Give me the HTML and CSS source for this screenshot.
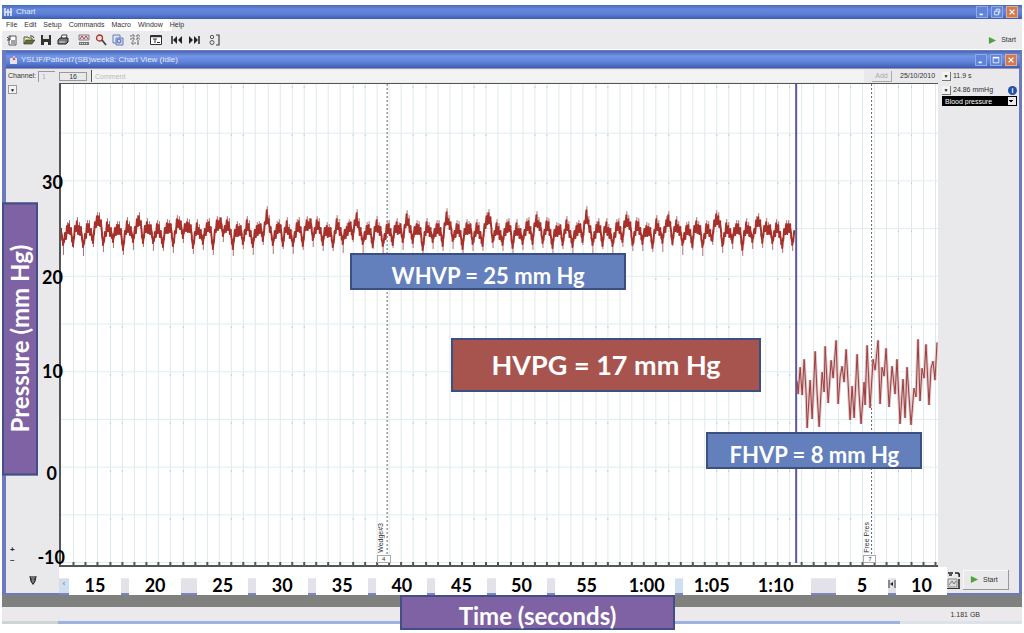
FILE: index.html
```html
<!DOCTYPE html>
<html lang="en">
<head>
<meta charset="utf-8">
<title>Chart</title>
<link rel="stylesheet" href="styles.css">
</head>
<body>
<div class="app">
  <header class="titlebar">
    <svg class="title-icon" viewBox="0 0 10 10"><path d="M1 1v8M4 2v7M7 1v8M1 5h7" stroke="#dfe6f7" stroke-width="1.6" fill="none"/></svg>
    <span class="title">Chart</span>
    <div class="window-buttons">
      <button class="win" aria-label="Minimize"><svg viewBox="0 0 10 10"><path d="M2 8h4" stroke="#fff" stroke-width="2"/></svg></button>
      <button class="win" aria-label="Restore"><svg viewBox="0 0 10 10"><path d="M4 4V1.500h4.500V6H7M2 4h5v4.500H2z" fill="none" stroke="#fff"/></svg></button>
      <button class="win close" aria-label="Close"><svg viewBox="0 0 10 10"><path d="M2 2l6 6M8 2L2 8" stroke="#fff" stroke-width="1.600"/></svg></button>
    </div>
  </header>

  <nav class="menubar">
    <button>File</button><button>Edit</button><button>Setup</button><button>Commands</button><button>Macro</button><button>Window</button><button>Help</button>
  </nav>

  <div class="toolbar">
    <button class="tool" aria-label="New"><svg viewBox="0 0 12 12"><path d="M3 2h7v9H3z" fill="#fff" stroke="#555"/><path d="M1 3l3 3M4 2v4H1M5 7h4M5 9h4" stroke="#444" fill="none"/></svg></button>
    <button class="tool" aria-label="Open"><svg viewBox="0 0 12 12"><path d="M1 10V3h4l1 1h3v2" fill="#e9e59a" stroke="#555"/><path d="M1 10l2-4h9l-3 4z" fill="#5d7534" stroke="#333" stroke-width=".6"/><path d="M7 2q3-1 4 2" fill="none" stroke="#333"/></svg></button>
    <button class="tool" aria-label="Save"><svg viewBox="0 0 12 12"><path d="M1 1h10v10H1z" fill="#333"/><path d="M3 1h6v4H3z" fill="#dfe5da"/><path d="M4 8h4v3H4z" fill="#eee"/></svg></button>
    <button class="tool gap" aria-label="Print"><svg viewBox="0 0 12 12"><path d="M4 5l1-4h5L9 5" fill="#fff" stroke="#444"/><path d="M1 6l2-2h8v4l-2 2H1z" fill="#777" stroke="#222"/><path d="M2 8h6" stroke="#ddd"/></svg></button>
    <button class="tool" aria-label="Channel settings"><svg viewBox="0 0 12 12"><path d="M1 1h10v5H1z" fill="#e6dde8" stroke="#555" stroke-width=".7"/><path d="M2 5l2-3 2 3 2-3 2 3" fill="none" stroke="#a44"/><path d="M1 8h10v3H1z" fill="#777"/><path d="M2 9.500h8" stroke="#ddd" stroke-dasharray="1 1"/></svg></button>
    <button class="tool" aria-label="Zoom"><svg viewBox="0 0 12 12"><circle cx="4.500" cy="4" r="3" fill="#f6e4d2" stroke="#a33" stroke-width="1.300"/><path d="M7 6l4 5" stroke="#444" stroke-width="1.800"/></svg></button>
    <button class="tool" aria-label="Pages"><svg viewBox="0 0 12 12"><path d="M1 1h7v8H1z" fill="#e0e6fa" stroke="#667ab5"/><path d="M4 4h7v7H4z" fill="#cdd7f4" stroke="#667ab5"/><circle cx="7" cy="7" r="2" fill="none" stroke="#4c63ae"/></svg></button>
    <button class="tool" aria-label="Split"><svg viewBox="0 0 12 12"><path d="M1 2h10M1 5h10M4 0v12M9 0v12M2 9h9" stroke="#666" stroke-width="1" stroke-dasharray="2 1"/></svg></button>
    <button class="tool wide" aria-label="Text window"><svg viewBox="0 0 12 12"><path d="M.500 1.500h11v9H.500z" fill="#fff" stroke="#333"/><path d="M.500 2.500h11" stroke="#333" stroke-width="1.500"/><path d="M3 5h4M5 5v4M7 8.500h3" stroke="#333"/></svg></button>
    <button class="tool" aria-label="First"><svg viewBox="0 0 12 12"><path d="M1 2v8" stroke="#222" stroke-width="1.500"/><path d="M6 2v8L2 6zM11 2v8L7 6z" fill="#222"/></svg></button>
    <button class="tool gap" aria-label="Last"><svg viewBox="0 0 12 12"><path d="M11 2v8" stroke="#222" stroke-width="1.500"/><path d="M1 2v8l4-4zM6 2v8l4-4z" fill="#222"/></svg></button>
    <button class="tool" aria-label="Markers"><svg viewBox="0 0 12 12"><circle cx="3" cy="3" r="1.700" fill="none" stroke="#555"/><circle cx="3" cy="8.500" r="2" fill="none" stroke="#555"/><path d="M7 1h3v10H7" fill="none" stroke="#444" stroke-width="1.200"/></svg></button>
    <button class="start"><svg viewBox="0 0 10 10"><path d="M1 1l8 4-8 4z" fill="#4ca53a"/></svg>Start</button>
  </div>

  <main class="chart-window">
    <header class="titlebar child">
      <svg class="title-icon" viewBox="0 0 10 10"><path d="M1 3h7v6H1z" fill="#e8e2ef"/><path d="M3 5l2-4 2 4" fill="#c55" stroke="#fff" stroke-width=".600"/></svg>
      <h1 class="title">YSLIF/Patient7(SB)week8: Chart View (Idle)</h1>
      <div class="window-buttons">
        <button class="win" aria-label="Minimize chart"><svg viewBox="0 0 10 10"><path d="M2 8h4" stroke="#fff" stroke-width="2"/></svg></button>
        <button class="win" aria-label="Maximize chart"><svg viewBox="0 0 10 10"><path d="M1.500 2v6.500h7V2z" fill="none" stroke="#fff"/><path d="M1 2h8" stroke="#fff" stroke-width="2"/></svg></button>
        <button class="win close" aria-label="Close chart"><svg viewBox="0 0 10 10"><path d="M2 2l6 6M8 2L2 8" stroke="#fff" stroke-width="1.600"/></svg></button>
      </div>
    </header>

    <div class="channel-bar">
      <label for="channel">Channel:</label>
      <input id="channel" class="channel-number" type="text" value="1">
      <button class="rate">16</button>
      <input class="comment" type="text" placeholder="Comment" aria-label="Comment">
      <button class="add">Add</button>
      <span class="date">25/10/2010</span>
      <span class="readout"><button class="drop" aria-label="Time options">▼</button>11.9 s</span>
    </div>

    <div class="chart-body">
      <aside class="scale">
        <button class="drop scale-menu" aria-label="Scale options">▼</button>
        <span class="y-label y30">30</span>
        <span class="y-label y20">20</span>
        <span class="y-label y10">10</span>
        <span class="y-label y0">0</span>
        <span class="y-label yn10">-10</span>
        <span class="axis-title pressure">Pressure (mm Hg)</span>
        <span class="plus-minus">+<br>–</span>
      </aside>
      <section class="plot" aria-label="Pressure over time">
        <svg id="trace" viewBox="0 0 878 484" preserveAspectRatio="none"></svg>
        <span class="marker-text first">Wedge#3</span><span class="marker-box first">4</span>
        <span class="marker-text second">Free Pres</span><span class="marker-box second">7</span>
        <div class="callout whvp">WHVP = 25 mm Hg</div>
        <div class="callout hvpg">HVPG = 17 mm Hg</div>
        <div class="callout fhvp">FHVP = 8 mm Hg</div>
      </section>
      <aside class="side">
        <div class="side-row"><button class="drop" aria-label="Channel options">▼</button>24.86 mmHg<span class="info">i</span></div>
        <select class="channel-select" aria-label="Channel name"><option>Blood pressure</option></select>
      </aside>
    </div>

    <div class="axis">
      <div class="axis-left"><svg viewBox="0 0 8 10"><path d="M1 1l1 5 2 3 2-3 1-5M3 1v4M5 1v4M2 6h4" fill="none" stroke="#222" stroke-width="1.200"/></svg></div>
      <div class="times">
        <i class="scroll">‹</i><span>15</span><i></i><span>20</span><i></i><span>25</span><i></i><span>30</span><i></i><span>35</span><i></i><span>40</span><i></i><span>45</span><i></i><span>50</span><i></i><span>55</span><span>1:00</span><i class="scroll"></i><span>1:05</span><span>1:10</span><i></i><span>5</span><i><svg viewBox="0 0 8 10"><path d="M1 1v8M7 1v8" stroke="#333"/><path d="M2 5l3-2v4z" fill="#222"/></svg></i><span>10</span>
      </div>
      <div class="axis-right">
        <svg viewBox="0 0 14 18"><path d="M1 2h5M2 4h3M8 2h3q2 1 1 4M12 8v9" stroke="#222" stroke-width="1.500" fill="none"/><path d="M1 8h9v8H1z" fill="#ddd" stroke="#888"/><path d="M2 14l3-4 2 3 2-3" fill="none" stroke="#777"/><path d="M0 17.500h13" stroke="#333"/></svg>
        <button class="start raised"><svg viewBox="0 0 10 10"><path d="M1 1l8 4-8 4z" fill="#4ca53a"/></svg>Start</button>
      </div>
    </div>
  </main>

  <footer class="bottom">
    <div class="desk"></div>
    <div class="status">1.181 GB</div>
    <div class="edge"></div>
    <span class="axis-title time">Time (seconds)</span>
  </footer>
</div>
<script src="chart.js"></script>
</body>
</html>
```
FILE: styles.css
```css
* { box-sizing: border-box; }
body { margin: 0; background: #fff; font: 7px/10px "Liberation Sans", Arial, sans-serif; color: #333; }
button, input, select { font: inherit; color: inherit; margin: 0; padding: 0; border: 0; border-radius: 0; background: none; }
.app { min-height: 100vh; display: flex; flex-direction: column; padding: 5px 2px 9px; }

.titlebar { display: flex; align-items: center; height: 14px; flex: none; padding: 0 4px 0 2px; color: #e4eafa;
  background: linear-gradient(#4a69b8, #6688dc 30%, #5b7fd6 65%, #3d5cae); }
.titlebar.child { height: 17px; padding: 0 3px; background: linear-gradient(#4867b4, #7395e6 30%, #5f83da 65%, #3d5cae); }
.title-icon { width: 10px; height: 10px; margin-right: 2px; }
.title { flex: 1; margin: 0; font-size: 8px; font-weight: 400; }
.window-buttons { display: flex; gap: 3px; }
.win { width: 12px; height: 12px; display: flex; align-items: center; justify-content: center; background: #5f84d8; border: 1px solid #91abe8; }
.win svg { width: 8px; height: 8px; }
.win.close { background: #d17a52; border-color: #e3ad94; }

.menubar { display: flex; gap: 7px; height: 12px; padding-left: 4px; flex: none; background: linear-gradient(90deg, #fff 170px, #ececef 170px); }
.toolbar { display: flex; align-items: center; gap: 5px; height: 18px; padding: 0 6px 0 4px; flex: none; background: #ebebed; }
.tool { width: 12px; height: 12px; }
.tool svg { display: block; width: 12px; height: 12px; }
.tool.gap { margin-right: 4px; }
.tool.wide { margin: 0 4px; }
.start { display: flex; align-items: center; gap: 4px; margin-left: auto; }
.start svg { width: 9px; height: 9px; }

.chart-window { flex: 1; display: flex; flex-direction: column; margin-top: 1px; border: solid #6c7ac0; border-width: 1px 3px 2px 4px; background: #e9e9ec; }
.chart-window > .titlebar { margin-right: -1px; }
.channel-bar { display: flex; align-items: center; height: 15px; flex: none; padding-left: 2px; border-top: 1px solid #9a92b4; }
.channel-number { width: 17px; height: 11px; margin-left: 2px; padding-left: 3px; border: solid #999; border-width: 1px 0 0 1px; color: #aaa; }
.rate { width: 28px; height: 9px; margin: 0 4px; border: 1px solid #999; line-height: 7px; }
.comment { flex: 1; min-width: 0; height: 12px; padding-left: 3px; background: #f3f3f4; border-left: 1px solid #555; }
.comment::placeholder { color: #bbb; opacity: 1; }
.add { width: 20px; height: 11px; margin: 0 8px; color: #aaa; border: solid #aaa; border-width: 0 1px 1px 0; }
.date { width: 42px; }
.readout { width: 77px; display: flex; align-items: center; gap: 2px; }
.drop { width: 9px; height: 9px; display: grid; place-items: center; background: #f3f3f3; border: solid #777; border-width: 0 1px 1px 0; font-size: 5px; line-height: 8px; color: #111; }

.chart-body { flex: 1; display: grid; grid-template-columns: 53px 1fr 81px; min-height: 320px; }
.scale { position: relative; z-index: 1; }
.scale-menu { margin: 2px; border: 1px solid #999; }
.y-label { position: absolute; right: -4px; transform: translateY(-50%); font: 700 18px/20px Lato, sans-serif; color: #000; }
.y30 { top: 20.5%; }
.y20 { top: 40%; }
.y10 { top: 59.5%; }
.y0 { top: 80.5%; right: 2px; }
.yn10 { top: 98%; right: -6px; }
.plus-minus { position: absolute; left: 4px; bottom: 2px; font-weight: 700; font-size: 8px; line-height: 10px; color: #222; }
.axis-title { position: absolute; display: flex; align-items: center; justify-content: center; background: #7f62a3; border: 2px solid #424f87; color: #fff; white-space: nowrap; font: 700 24px/28px Lato, sans-serif; }
.pressure { left: -4px; top: 24.5%; width: 36px; height: 56.5%; writing-mode: vertical-rl; transform: rotate(180deg); }

.plot { position: relative; background: #fff; border: solid #555; border-width: 1px 0 2px 2px; }
#trace { position: absolute; inset: 0; width: 100%; height: 100%; }
#trace path { fill: none; vector-effect: non-scaling-stroke; }
.grid-x { stroke: #dfe9eb; stroke-width: 1; }
.grid-y { stroke: #dceff1; stroke-width: 1; }
.grid-dots { stroke: #c3d2d0; stroke-width: 1; stroke-dasharray: 2 46; }
.ticks { stroke: #555; stroke-width: 2; }
.cursor { stroke: #5d5799; stroke-width: 2; }
.dashed { stroke: #666; stroke-width: 1; stroke-dasharray: 2 2; }
.wave-shadow { stroke: #a87070; stroke-width: 1; }
.wave { stroke: #a8302a; stroke-width: 2; stroke-linejoin: round; }
.wave.free { stroke: #a03c3d; stroke-width: 1; }
.wave-shadow.free { stroke: #dcc6c8; stroke-width: 3; }
.callout { position: absolute; display: flex; align-items: center; justify-content: center; border: 2px solid #3b5080; background: #6380bd; color: #fff; white-space: nowrap; font: 700 22px/26px Lato, sans-serif; }
.whvp { left: 33%; top: 35.2%; width: 31.4%; height: 37px; padding-top: 8px; }
.hvpg { left: 44.5%; top: 52.8%; width: 35.3%; height: 54px; background: #a7544f; font-size: 27px; }
.fhvp { left: 73.6%; top: 72.4%; width: 24.6%; height: 37px; padding-top: 8px; }
.marker-text { position: absolute; bottom: 12px; writing-mode: vertical-rl; transform: rotate(180deg); font-size: 7px; line-height: 8px; }
.marker-box { position: absolute; bottom: 2px; width: 13px; height: 8px; border: 1px solid #aaa; background: #fff; text-align: center; font-size: 6px; line-height: 6px; }
.marker-text.first { left: 36%; }
.marker-box.first { left: 36%; width: 14px; }
.marker-text.second { left: 91.5%; }
.marker-box.second { left: 91.5%; }

.side { padding: 1px 0 0 4px; }
.side-row { display: flex; align-items: center; gap: 2px; height: 12px; }
.info { width: 9px; height: 9px; margin-left: auto; margin-right: 2px; border-radius: 50%; background: #2450a8; color: #fff; text-align: center; font-weight: 700; line-height: 9px; }
.channel-select { appearance: none; display: block; width: 75px; height: 10px; padding-left: 2px; color: #fff; border: 1px solid #000;
  background: linear-gradient(#000, #000) left / 65px 100% no-repeat, linear-gradient(45deg, transparent 50%, #000 50%) right 5px center / 2px 2px no-repeat, linear-gradient(-45deg, transparent 50%, #000 50%) right 3px center / 2px 2px no-repeat, #e9e9ec; }

.axis { display: grid; grid-template-columns: 53px 1fr 72px; height: 26px; flex: none; }
.axis-left { display: grid; place-items: center; }
.axis-left svg { width: 8px; height: 10px; }
.times { display: grid; grid-template-columns: 10fr 52fr 8fr 52fr 16fr 51fr 8fr 52fr 8fr 52fr 8fr 51fr 8fr 52fr 9fr 50fr 8fr 64fr 56fr 8fr 58fr 70fr 25fr 52fr 8fr 51fr; margin-bottom: -2px; padding-top: 8px; position: relative; background: linear-gradient(#fff, #fff) top / 100% 11px no-repeat; }
.times span { min-width: 0; display: flex; justify-content: center; background: #fff; font: 700 18px/20px Lato, sans-serif; color: #000; }
.times i { min-width: 0; margin-top: 4px; background: #e3e1e9; border-bottom: 2px solid #7b85bf; font-style: normal; color: #468; }
.times .scroll { background: #cfdff0; text-align: center; }
.times i svg { display: block; width: 100%; height: 10px; }
.axis-right { display: flex; align-items: center; gap: 2px; }
.axis-right > svg { width: 14px; height: 18px; }
.raised { width: 46px; height: 20px; margin: 0; padding-left: 7px; border: solid #999; border-width: 0 1px 1px 0; box-shadow: inset 1px 1px #f8f8f8; }

.bottom { position: relative; flex: none; }
.desk { height: 12px; background: #80807f; }
.status { height: 14px; padding-right: 42px; line-height: 16px; text-align: right; background: #ebe9eb; }
.edge { height: 3px; background: linear-gradient(90deg, #cbd6d4 56px, #9db2df 56px 88%, #dde2e8 88%); }
.time { left: 39%; top: 0; width: 27%; height: 35px; padding-top: 6px; }
```
FILE: chart.js
```js
const svg = document.getElementById("trace");

function add(className, d) {
  const path = document.createElementNS("http://www.w3.org/2000/svg", "path");
  path.setAttribute("class", className);
  path.setAttribute("d", d);
  svg.appendChild(path);
}

let vertical = "", dots = "", ticks = "";
for (let i = 1; i < 73; i++) {
  const x = Math.round(i * 12.15) + 0.5;
  vertical += `M${x} 0V484`;
  if (i % 5 === 0 || i % 5 === 4) dots += `M${x} 2V484`;
  ticks += `M${x} 481v3`;
}
let horizontal = "";
for (let y = 50; y < 484; y += 48) horizontal += `M0 ${y - 0.5}H878`;
add("grid-x", vertical);
add("grid-y", horizontal);
add("grid-dots", dots);
add("ticks", ticks);
add("dashed", "M326.5 0V474M811.5 0V474");

// Breathing crests, in plot units along the time axis.
const crests = [38, 79, 120, 160, 206, 250, 293, 345, 386, 428, 476, 526, 567, 608, 657, 700];
const beat = [160, 155, 147, 149, 140, 147, 142, 149, 145, 154];
const wobble = n => Math.round(Math.sin(n * 12.9) * 2 + Math.sin(n * 5.3) * 2);
let wedge = "", spikes = "";
for (let x = 0; x <= 734; x++) {
  const near = Math.min(...crests.map(c => Math.abs(c - x)));
  const lift = near < 7 ? (7 - near) * 1.5 : 0;
  const phase = (x + 8) % 10;
  const y = Math.round(beat[phase] - lift + wobble(x));
  wedge += `${x ? "L" : "M"}${x} ${y}V${y + 3}`;
  if (phase === 0) spikes += `M${x + 0.5} ${y}v${9 + wobble(x + 3)}`;
  if (phase === 4 || phase === 6) spikes += `M${x + 0.5} ${y + 4}v-8`;
}
add("wave-shadow", spikes);
add("wave", wedge);

// Free pressure samples after the catheter is released.
const free = [[737,299],[738,312],[740,285],[742,313],[744,277],[746,312],[747,346],[750,298],[752,337],[755,269],[757,312],[759,345],[762,290],[764,310],[765,264],[768,321],[771,278],[773,296],[776,258],[778,322],[780,295],[782,284],[784,300],[786,267],[788,301],[790,338],[792,304],[794,336],[797,272],[799,312],[801,342],[804,300],[805,323],[807,263],[810,326],[813,277],[815,288],[818,258],[820,322],[822,285],[824,294],[826,266],[829,325],[832,284],[835,312],[837,277],[840,342],[843,297],[845,336],[847,285],[851,343],[854,306],[856,315],[858,257],[860,319],[862,286],[864,296],[866,262],[869,323],[871,286],[873,279],[875,298],[877,260]];
const freePath = "M" + free.map(p => p.join(" ")).join("L");
add("wave-shadow free", freePath);
add("wave free", freePath);
add("cursor", "M736 0V482");
```
